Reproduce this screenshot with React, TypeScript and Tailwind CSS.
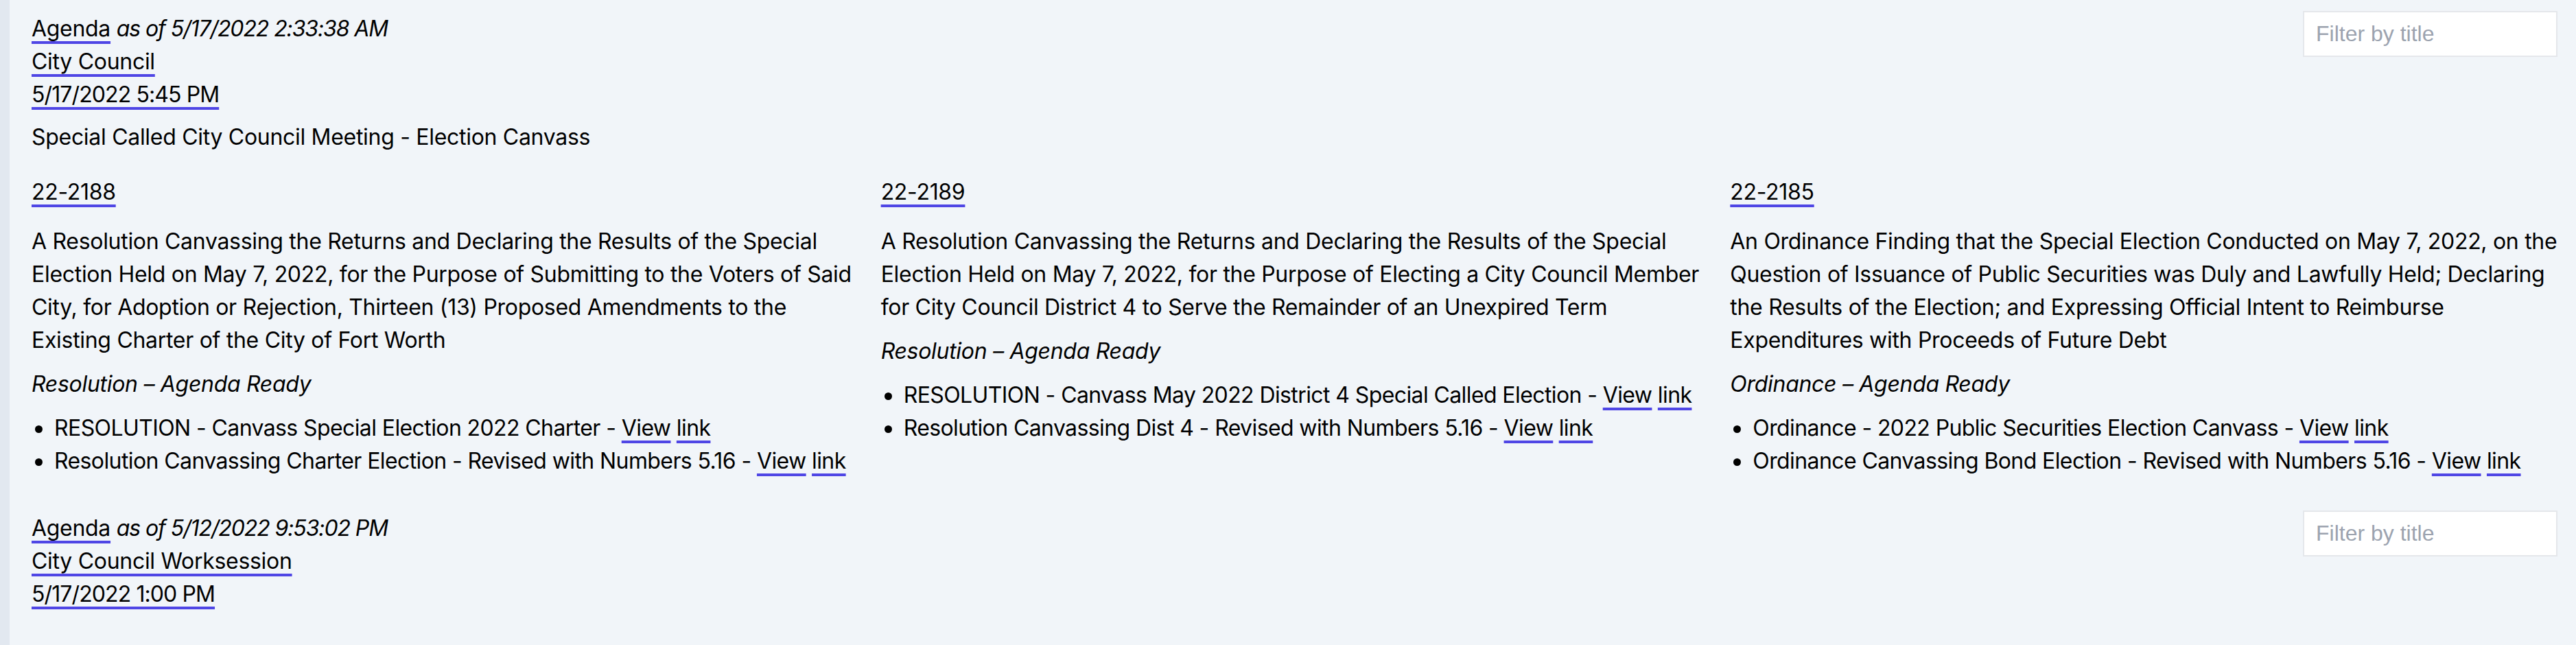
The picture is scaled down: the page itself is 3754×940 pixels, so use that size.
import React from "react";

type Item = {
  id: string;
  desc: string;
  status: string;
  files: string[];
};

const items: Item[] = [
  {
    id: "22-2188",
    desc: "A Resolution Canvassing the Returns and Declaring the Results of the Special Election Held on May 7, 2022, for the Purpose of Submitting to the Voters of Said City, for Adoption or Rejection, Thirteen (13) Proposed Amendments to the Existing Charter of the City of Fort Worth",
    status: "Resolution \u2013 Agenda Ready",
    files: [
      "RESOLUTION - Canvass Special Election 2022 Charter",
      "Resolution Canvassing Charter Election - Revised with Numbers 5.16",
    ],
  },
  {
    id: "22-2189",
    desc: "A Resolution Canvassing the Returns and Declaring the Results of the Special Election Held on May 7, 2022, for the Purpose of Electing a City Council Member for City Council District 4 to Serve the Remainder of an Unexpired Term",
    status: "Resolution \u2013 Agenda Ready",
    files: [
      "RESOLUTION - Canvass May 2022 District 4 Special Called Election",
      "Resolution Canvassing Dist 4 - Revised with Numbers 5.16",
    ],
  },
  {
    id: "22-2185",
    desc: "An Ordinance Finding that the Special Election Conducted on May 7, 2022, on the Question of Issuance of Public Securities was Duly and Lawfully Held; Declaring the Results of the Election; and Expressing Official Intent to Reimburse Expenditures with Proceeds of Future Debt",
    status: "Ordinance \u2013 Agenda Ready",
    files: [
      "Ordinance - 2022 Public Securities Election Canvass",
      "Ordinance Canvassing Bond Election - Revised with Numbers 5.16",
    ],
  },
];

function L({ children }: { children: React.ReactNode }) {
  return (
    <a
      href="#"
      className="underline decoration-[#4f46e5] decoration-4 underline-offset-[7px] [text-decoration-skip-ink:none]"
    >
      {children}
    </a>
  );
}

function FilterInput() {
  return (
    <input
      type="text"
      placeholder="Filter by title"
      className="w-[371px] h-[67px] shrink-0 border-2 border-[#e5e7eb] bg-white pl-[17px] text-[32px] tracking-normal font-['Liberation_Sans',Arial,sans-serif] placeholder:text-[#9ca3af] outline-none"
    />
  );
}

function Header({
  asOf,
  body,
  date,
}: {
  asOf: string;
  body: string;
  date: string;
}) {
  return (
    <div className="flex items-start justify-between">
      <div className="flex flex-col pt-[2px]">
        <div>
          <L>Agenda</L>{" "}
          <em className="tracking-[-1.1px]">as of {asOf}</em>
        </div>
        <div>
          <L>{body}</L>
        </div>
        <div className="tracking-[-0.9px]">
          <L>{date}</L>
        </div>
      </div>
      <FilterInput />
    </div>
  );
}

export default function App() {
  return (
    <div className="min-h-screen bg-[#f1f5f9] border-l-[14px] border-[#e2e8f0] pl-8 pr-[27px] pt-[16px] text-black text-[32px] leading-[48px] tracking-[-0.3px] font-['Inter','Noto_Sans',sans-serif]">
      <section>
        <Header
          asOf="5/17/2022 2:33:38 AM"
          body="City Council"
          date="5/17/2022 5:45 PM"
        />
        <p className="mt-[14px]">
          Special Called City Council Meeting - Election Canvass
        </p>
        <div className="mt-8 grid grid-cols-3 gap-8">
          {items.map((it) => (
            <div key={it.id} className="flex flex-col">
              <div>
                <L>{it.id}</L>
              </div>
              <p className="mt-6">{it.desc}</p>
              <p className="mt-4 italic">{it.status}</p>
              <ul className="mt-4 tracking-[-0.6px]">
                {it.files.map((f) => (
                  <li key={f} className="flex">
                    <span className="flex h-[48px] w-[33px] shrink-0 items-center">
                      <span className="ml-[5px] mt-[3px] block h-[11px] w-[11px] rounded-full bg-black" />
                    </span>
                    <span>
                      {f} - <L>View</L> <L>link</L>
                    </span>
                  </li>
                ))}
              </ul>
            </div>
          ))}
        </div>
      </section>
      <section className="mt-[48px]">
        <Header
          asOf="5/12/2022 9:53:02 PM"
          body="City Council Worksession"
          date="5/17/2022 1:00 PM"
        />
      </section>
    </div>
  );
}
